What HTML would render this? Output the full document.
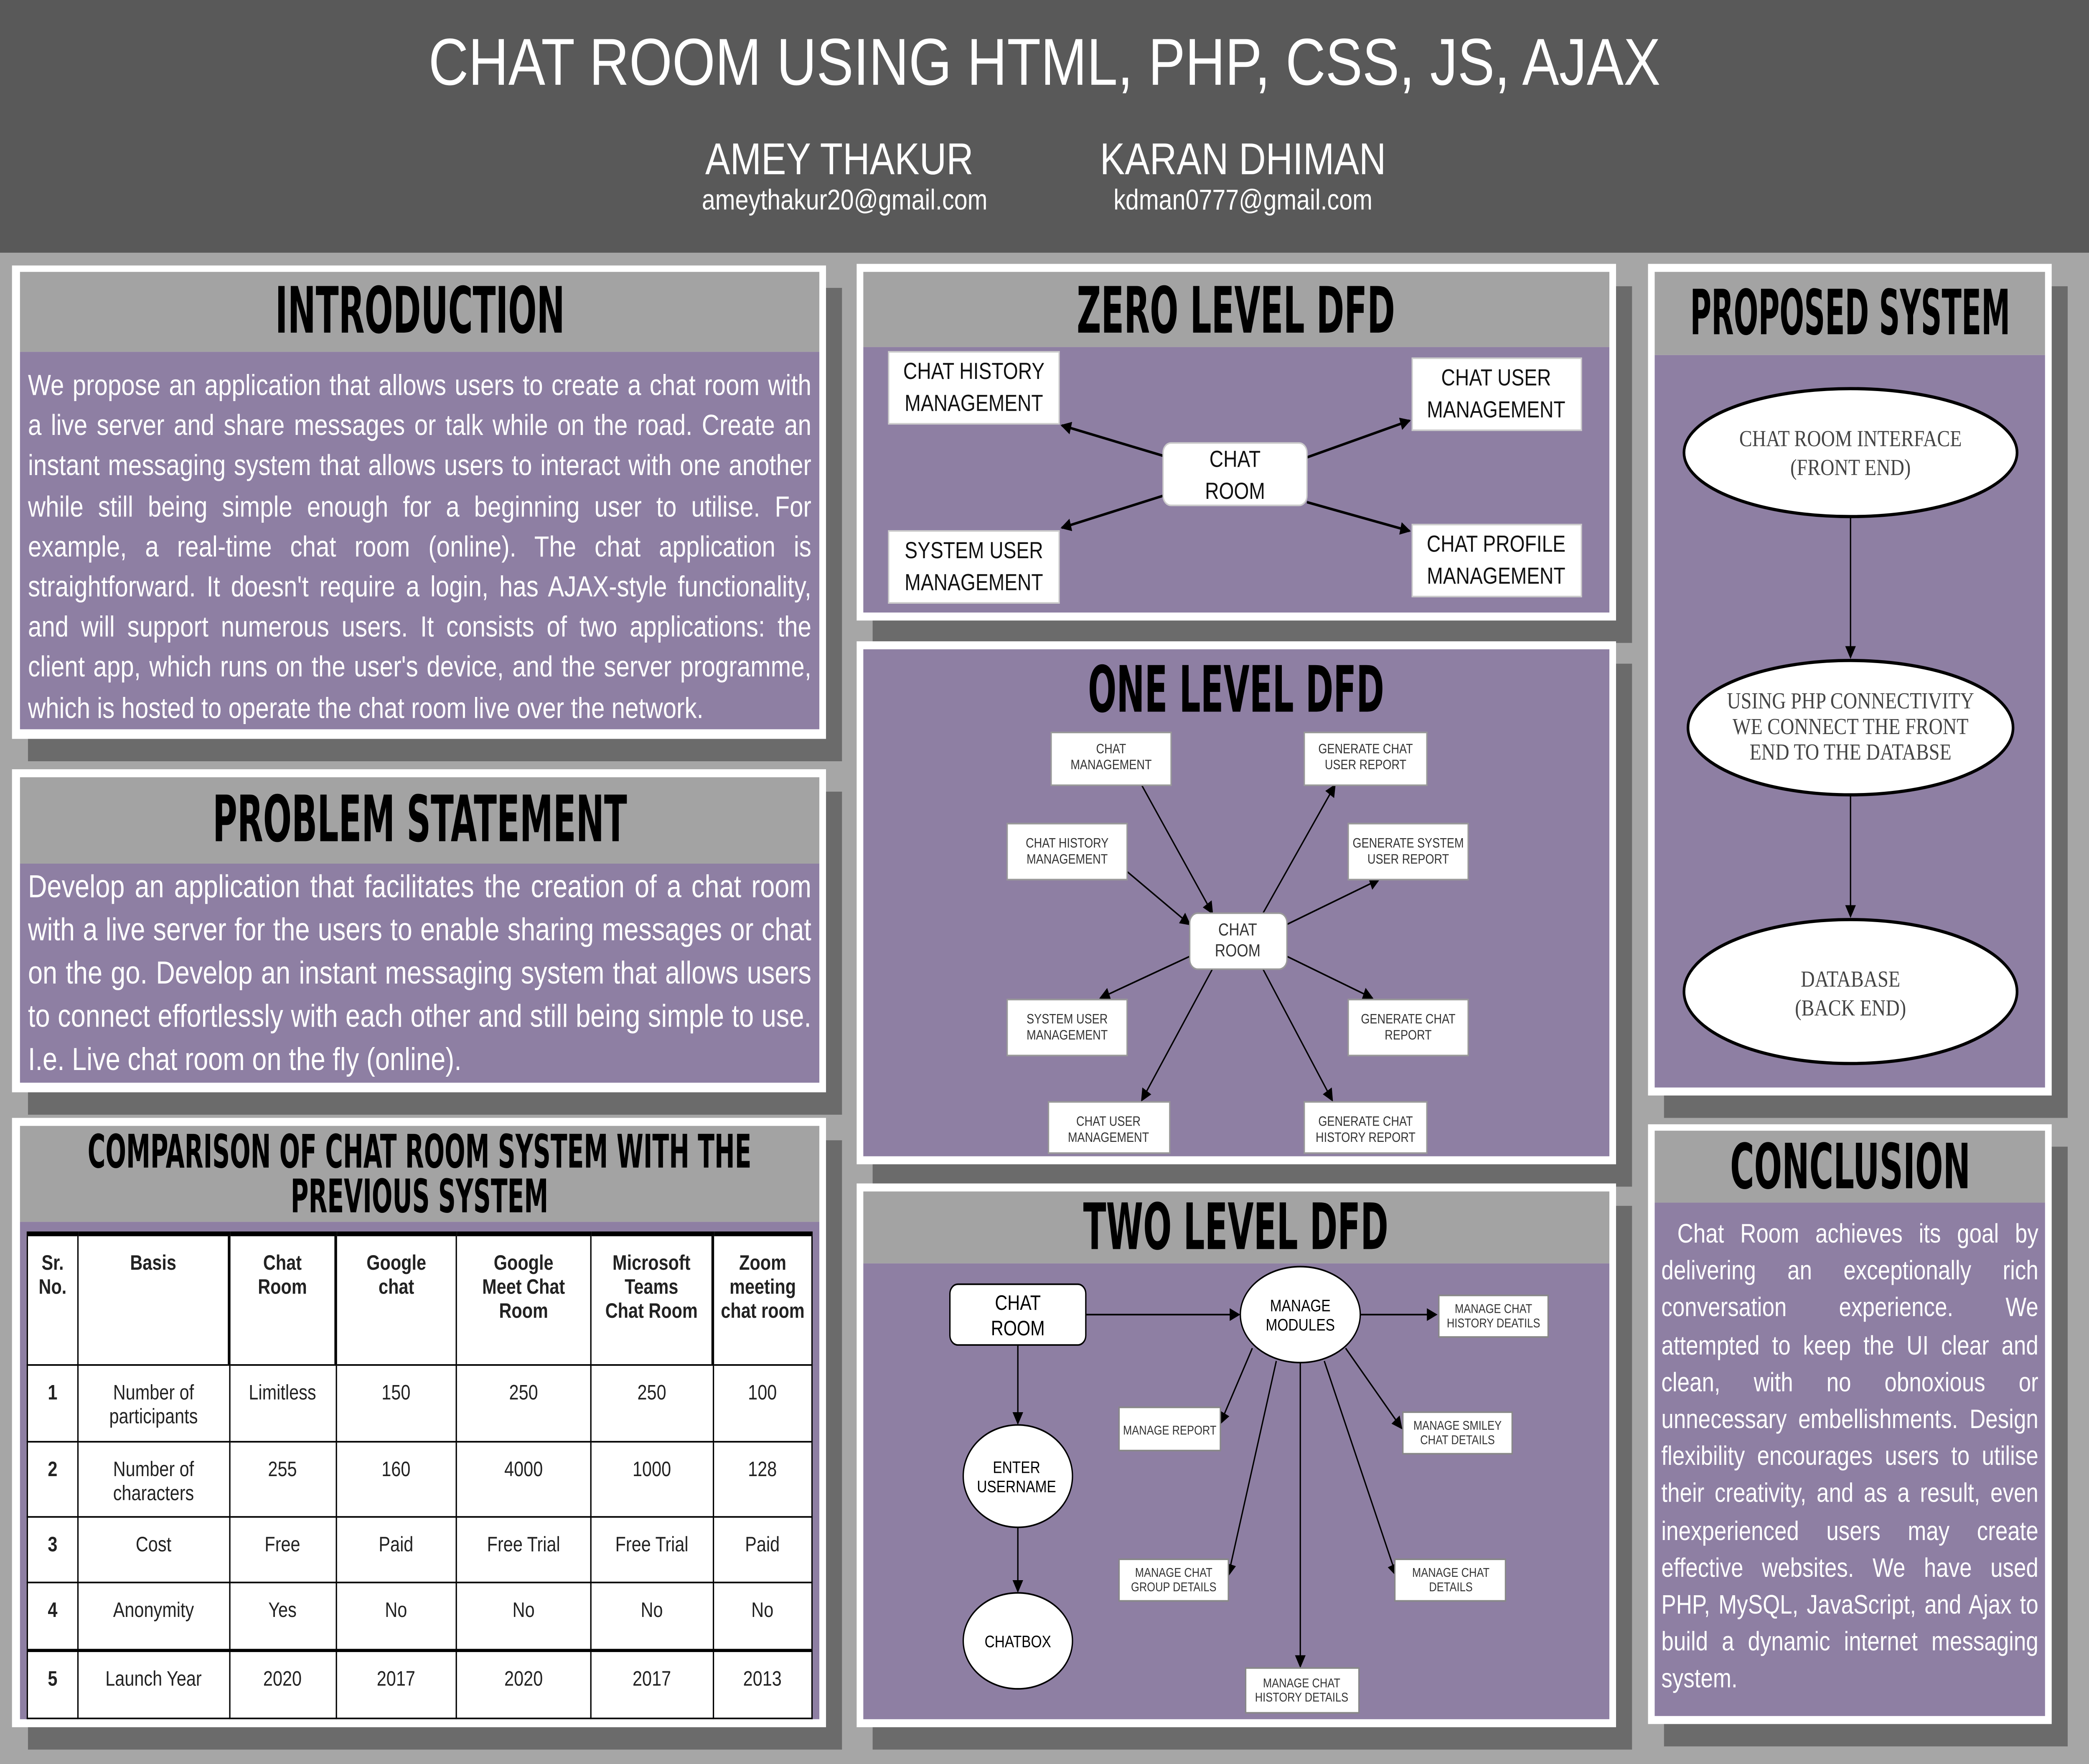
<!DOCTYPE html>
<html><head><meta charset="utf-8"><style>
html,body{margin:0;padding:0;width:100vw;height:100vh;background:#a6a6a6;overflow:hidden;}
#root{position:absolute;left:0;top:0;width:100vw;height:100vh;display:block;}
#w{position:relative;width:1568px;height:1103px;background:#a6a6a6;font-family:"Liberation Sans",sans-serif;overflow:hidden;}
.a{position:absolute;}
.hdr{left:0;top:0;width:1568px;height:158px;background:#595959;color:#fff;text-align:center;}
.panel{position:absolute;background:#fff;box-shadow:12px 14px 0 #6b6b6b;}
.h{position:absolute;background:#a3a3a3;text-align:center;font-family:"DejaVu Sans Condensed","Liberation Sans",sans-serif;font-weight:bold;color:#000;white-space:nowrap;}
.h span{display:inline-block;transform:scaleX(0.7);transform-origin:50% 50%;margin:0 -300px;}
.p{position:absolute;background:#8e7fa3;color:#fff;}
.txt{text-align:justify;}
table{border-collapse:collapse;position:absolute;left:20px;top:770px;width:590px;height:303px;background:#fff;font-size:13px;color:#222;}
td,th{border:1px solid #000;text-align:center;vertical-align:top;padding:9px 0 0 0;}
th{font-weight:bold;}
svg text{font-family:"Liberation Sans",sans-serif;}
</style></head><body>
<svg id="root" viewBox="0 0 1568 1103" preserveAspectRatio="none" xmlns="http://www.w3.org/2000/svg">
<foreignObject x="0" y="0" width="1568" height="1103">
<div xmlns="http://www.w3.org/1999/xhtml" id="w">
<div class="a hdr">
<div class="a" style="left:0;width:1568px;top:15px;font-size:41.5px;">CHAT ROOM USING HTML, PHP, CSS, JS, AJAX</div>
<div class="a" style="left:480px;width:300px;top:84px;font-size:28px;">AMEY THAKUR</div>
<div class="a" style="left:480px;width:308px;top:115px;font-size:18px;">ameythakur20@gmail.com</div>
<div class="a" style="left:783px;width:300px;top:84px;font-size:28px;">KARAN DHIMAN</div>
<div class="a" style="left:783px;width:300px;top:115px;font-size:18px;">kdman0777@gmail.com</div>
</div>

<div class="panel" style="left:9px;top:166px;width:611px;height:296px;"></div>
<div class="h" style="left:15px;top:170px;width:600px;height:50px;font-size:40px;line-height:50px;"><span>INTRODUCTION</span></div>
<div class="p txt" style="left:15px;top:220px;width:588px;height:236px;padding:0 6px;font-size:18.3px;line-height:25.2px;"><div style="padding-top:8px;">We propose an application that allows users to create a chat room with a live server and share messages or talk while on the road. Create an instant messaging system that allows users to interact with one another while still being simple enough for a beginning user to utilise. For example, a real-time chat room (online). The chat application is straightforward. It doesn't require a login, has AJAX-style functionality, and will support numerous users. It consists of two applications: the client app, which runs on the user's device, and the server programme, which is hosted to operate the chat room live over the network.</div></div>

<div class="panel" style="left:9px;top:481px;width:611px;height:202px;"></div>
<div class="h" style="left:15px;top:486px;width:600px;height:54px;font-size:40px;line-height:54px;"><span>PROBLEM STATEMENT</span></div>
<div class="p txt" style="left:15px;top:540px;width:588px;height:137px;padding:0 6px;font-size:19.8px;line-height:27px;"><div style="padding-top:2px;">Develop an application that facilitates the creation of a chat room with a live server for the users to enable sharing messages or chat on the go. Develop an instant messaging system that allows users to connect effortlessly with each other and still being simple to use. I.e. Live chat room on the fly (online).</div></div>

<div class="panel" style="left:9px;top:699px;width:611px;height:381px;"></div>
<div class="h" style="left:15px;top:704px;width:600px;height:60px;font-size:29px;line-height:28px;padding-top:2px;box-sizing:border-box;"><span>COMPARISON OF CHAT ROOM SYSTEM WITH THE<br/>PREVIOUS SYSTEM</span></div>
<div class="p" style="left:15px;top:764px;width:600px;height:311px;"></div>
<table>
<tr style="height:82px"><th style="width:37px;border-top:3px solid #000">Sr.<br/>No.</th><th style="width:112px;border-top:3px solid #000">Basis</th><th style="width:78px;border-top:3px solid #000;border-left:2px solid #000">Chat<br/>Room</th><th style="width:89px;border-top:3px solid #000;border-left:2px solid #000">Google<br/>chat</th><th style="width:100px;border-top:3px solid #000">Google<br/>Meet Chat<br/>Room</th><th style="width:90px;border-top:3px solid #000">Microsoft<br/>Teams<br/>Chat Room</th><th style="border-top:3px solid #000;border-left:2px solid #000;white-space:nowrap">Zoom<br/>meeting<br/>chat room</th></tr>
<tr style="height:48px"><th>1</th><td>Number of<br/>participants</td><td>Limitless</td><td>150</td><td>250</td><td>250</td><td>100</td></tr>
<tr style="height:47px"><th>2</th><td>Number of<br/>characters</td><td>255</td><td>160</td><td>4000</td><td>1000</td><td>128</td></tr>
<tr style="height:41px"><th>3</th><td>Cost</td><td>Free</td><td>Paid</td><td>Free Trial</td><td>Free Trial</td><td>Paid</td></tr>
<tr style="height:42px"><th>4</th><td>Anonymity</td><td>Yes</td><td>No</td><td>No</td><td>No</td><td>No</td></tr>
<tr style="height:43px;border-top:2px solid #000"><th>5</th><td>Launch Year</td><td>2020</td><td>2017</td><td>2020</td><td>2017</td><td>2013</td></tr>
</table>

<div class="panel" style="left:643px;top:165px;width:570px;height:223px;"></div>
<div class="h" style="left:648px;top:170px;width:560px;height:47px;font-size:40px;line-height:50px;"><span>ZERO LEVEL DFD</span></div>
<div class="p" style="left:648px;top:217px;width:560px;height:166px;"></div>

<div class="panel" style="left:643px;top:401px;width:570px;height:327px;"></div>
<div class="p" style="left:648px;top:406px;width:560px;height:317px;"></div>
<div class="h" style="left:648px;top:408px;width:560px;height:46px;font-size:40px;line-height:48px;background:none;"><span>ONE LEVEL DFD</span></div>

<div class="panel" style="left:643px;top:740px;width:570px;height:340px;"></div>
<div class="h" style="left:648px;top:745px;width:560px;height:45px;font-size:40px;line-height:46px;"><span>TWO LEVEL DFD</span></div>
<div class="p" style="left:648px;top:790px;width:560px;height:285px;"></div>

<div class="panel" style="left:1237px;top:165px;width:303px;height:520px;"></div>
<div class="h" style="left:1242px;top:170px;width:293px;height:52px;font-size:39px;line-height:54px;"><span style="transform:scaleX(0.62)">PROPOSED SYSTEM</span></div>
<div class="p" style="left:1242px;top:222px;width:293px;height:458px;"></div>

<div class="panel" style="left:1237px;top:703px;width:303px;height:375px;"></div>
<div class="h" style="left:1242px;top:707px;width:293px;height:45px;font-size:39px;line-height:48px;"><span>CONCLUSION</span></div>
<div class="p txt" style="left:1242px;top:752px;width:283px;height:321px;padding:0 5px;font-size:16.6px;line-height:23.2px;"><div style="padding-top:8px;text-indent:12px;">Chat Room achieves its goal by delivering an exceptionally rich conversation experience. We attempted to keep the UI clear and clean, with no obnoxious or unnecessary embellishments. Design flexibility encourages users to utilise their creativity, and as a result, even inexperienced users may create effective websites. We have used PHP, MySQL, JavaScript, and Ajax to build a dynamic internet messaging system.</div></div>
</div>
</foreignObject>

<defs><marker id="ar" markerWidth="8" markerHeight="8" refX="7" refY="4" orient="auto" markerUnits="userSpaceOnUse"><path d="M0,0 L8,4 L0,8 z" fill="#000"/></marker></defs>
<g stroke="#000" stroke-width="1.6" marker-end="url(#ar)">
<line x1="873" y1="285" x2="797" y2="266"/><line x1="981" y1="286" x2="1058" y2="263"/>
<line x1="873" y1="310" x2="797" y2="330"/><line x1="981" y1="314" x2="1058" y2="332"/></g>
<g fill="#fff" stroke="#ccc"><rect x="667" y="220" width="128" height="45"/><rect x="1060" y="224" width="127" height="45"/><rect x="873" y="277" width="108" height="39" rx="6"/><rect x="667" y="332" width="128" height="45"/><rect x="1060" y="328" width="127" height="45"/></g>
<g font-size="14.5" text-anchor="middle" fill="#111">
<text x="731" y="237">CHAT HISTORY</text><text x="731" y="257">MANAGEMENT</text>
<text x="1123" y="241">CHAT USER</text><text x="1123" y="261">MANAGEMENT</text>
<text x="927" y="292">CHAT</text><text x="927" y="312">ROOM</text>
<text x="731" y="349">SYSTEM USER</text><text x="731" y="369">MANAGEMENT</text>
<text x="1123" y="345">CHAT PROFILE</text><text x="1123" y="365">MANAGEMENT</text></g>
<g stroke="#000" stroke-width="1" marker-end="url(#ar)">
<line x1="857" y1="491" x2="910" y2="571"/><line x1="948" y1="571" x2="1002" y2="491"/>
<line x1="846" y1="545" x2="893" y2="578"/><line x1="966" y1="578" x2="1035" y2="550"/>
<line x1="893" y1="598" x2="826" y2="624"/><line x1="966" y1="598" x2="1030" y2="624"/>
<line x1="910" y1="606" x2="857" y2="688"/><line x1="948" y1="606" x2="1000" y2="688"/></g>
<g fill="#fff" stroke="#999"><rect x="893" y="571" width="73" height="35" rx="6"/>
<rect x="789" y="458" width="90" height="33"/><rect x="979" y="458" width="92" height="33"/>
<rect x="756" y="515" width="90" height="35"/><rect x="1012" y="515" width="90" height="35"/>
<rect x="756" y="625" width="90" height="35"/><rect x="1012" y="625" width="90" height="35"/>
<rect x="787" y="689" width="91" height="32"/><rect x="979" y="689" width="92" height="32"/></g>
<g font-size="8.5" text-anchor="middle" fill="#333">
<text x="929" y="585" font-size="11">CHAT</text><text x="929" y="598" font-size="11">ROOM</text>
<text x="834" y="471">CHAT</text><text x="834" y="481">MANAGEMENT</text>
<text x="1025" y="471">GENERATE CHAT</text><text x="1025" y="481">USER REPORT</text>
<text x="801" y="530">CHAT HISTORY</text><text x="801" y="540">MANAGEMENT</text>
<text x="1057" y="530">GENERATE SYSTEM</text><text x="1057" y="540">USER REPORT</text>
<text x="801" y="640">SYSTEM USER</text><text x="801" y="650">MANAGEMENT</text>
<text x="1057" y="640">GENERATE CHAT</text><text x="1057" y="650">REPORT</text>
<text x="832" y="704">CHAT USER</text><text x="832" y="714">MANAGEMENT</text>
<text x="1025" y="704">GENERATE CHAT</text><text x="1025" y="714">HISTORY REPORT</text></g>
<g stroke="#000" stroke-width="1" marker-end="url(#ar)">
<line x1="815" y1="822" x2="930" y2="822"/><line x1="1021" y1="822" x2="1078" y2="822"/>
<line x1="764" y1="841" x2="764" y2="890"/><line x1="764" y1="955" x2="764" y2="995"/>
<line x1="940" y1="843" x2="916" y2="890"/><line x1="1010" y1="843" x2="1052" y2="893"/>
<line x1="958" y1="851" x2="922" y2="985"/><line x1="994" y1="851" x2="1048" y2="985"/>
<line x1="976" y1="852" x2="976" y2="1042"/></g>
<g fill="#fff" stroke="#000" stroke-width="1">
<rect x="713" y="803" width="102" height="38" rx="6"/>
<ellipse cx="976" cy="822" rx="45" ry="30"/><ellipse cx="764" cy="923" rx="41" ry="32"/><ellipse cx="764" cy="1026" rx="41" ry="30"/></g>
<g fill="#fff" stroke="#888"><rect x="1080" y="810" width="82" height="26"/><rect x="840" y="880" width="76" height="27"/><rect x="1053" y="883" width="82" height="26"/><rect x="840" y="975" width="82" height="26"/><rect x="1047" y="975" width="83" height="26"/><rect x="935" y="1043" width="85" height="28"/></g>
<g font-size="8" text-anchor="middle" fill="#333">
<text x="764" y="819" font-size="13" fill="#000">CHAT</text><text x="764" y="835" font-size="13" fill="#000">ROOM</text>
<text x="976" y="820" font-size="10.5" fill="#000">MANAGE</text><text x="976" y="832" font-size="10.5" fill="#000">MODULES</text>
<text x="763" y="921" font-size="10.5" fill="#000">ENTER</text><text x="763" y="933" font-size="10.5" fill="#000">USERNAME</text>
<text x="764" y="1030" font-size="10.5" fill="#000">CHATBOX</text>
<text x="1121" y="821">MANAGE CHAT</text><text x="1121" y="830">HISTORY DEATILS</text>
<text x="878" y="897">MANAGE REPORT</text>
<text x="1094" y="894">MANAGE SMILEY</text><text x="1094" y="903">CHAT DETAILS</text>
<text x="881" y="986">MANAGE CHAT</text><text x="881" y="995">GROUP DETAILS</text>
<text x="1089" y="986">MANAGE CHAT</text><text x="1089" y="995">DETAILS</text>
<text x="977" y="1055">MANAGE CHAT</text><text x="977" y="1064">HISTORY DETAILS</text></g>
<g stroke="#000" stroke-width="1" marker-end="url(#ar)"><line x1="1389" y1="323" x2="1389" y2="411"/><line x1="1389" y1="497" x2="1389" y2="573"/></g>
<g fill="#fff" stroke="#000" stroke-width="2"><ellipse cx="1389" cy="283" rx="125" ry="40"/><ellipse cx="1389" cy="455" rx="122" ry="42"/><ellipse cx="1389" cy="620" rx="125" ry="45"/></g>
<g font-size="14.5" text-anchor="middle" fill="#444">
<text x="1389" y="279" style="font-family:'Liberation Serif',serif">CHAT ROOM INTERFACE</text><text x="1389" y="297" style="font-family:'Liberation Serif',serif">(FRONT END)</text>
<text x="1389" y="443" style="font-family:'Liberation Serif',serif">USING PHP CONNECTIVITY</text><text x="1389" y="459" style="font-family:'Liberation Serif',serif">WE CONNECT THE FRONT</text><text x="1389" y="475" style="font-family:'Liberation Serif',serif">END TO THE DATABSE</text>
<text x="1389" y="617" style="font-family:'Liberation Serif',serif">DATABASE</text><text x="1389" y="635" style="font-family:'Liberation Serif',serif">(BACK END)</text></g>
</svg>
</body></html>
